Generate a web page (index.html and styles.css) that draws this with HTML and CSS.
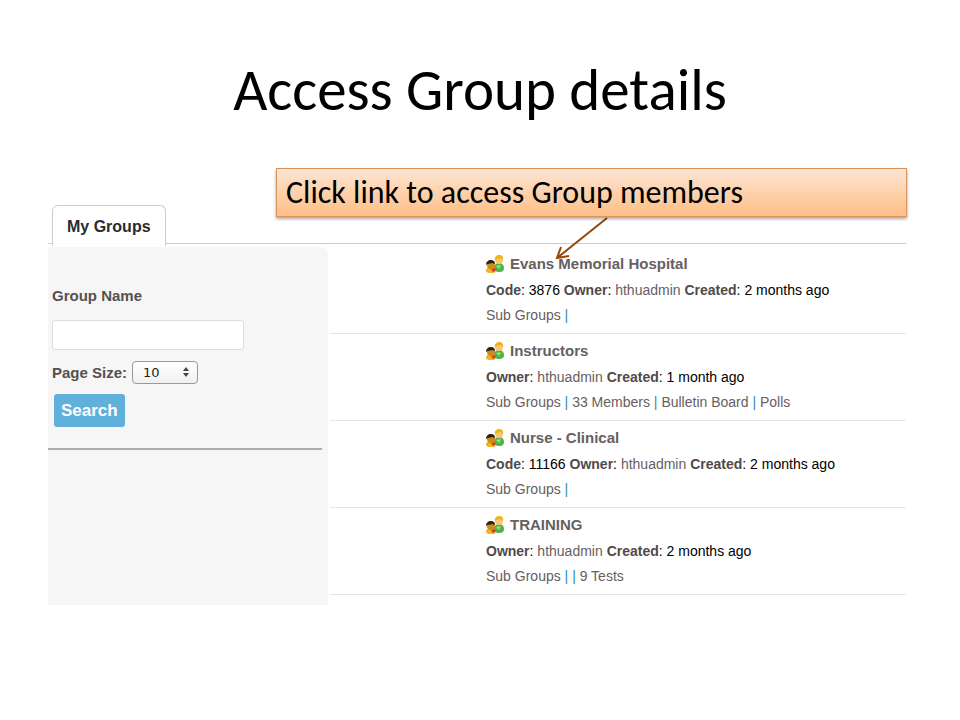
FILE: index.html
```html
<!DOCTYPE html>
<html lang="en">
  <head>
    <meta charset="UTF-8" />
    <meta name="viewport" content="width=device-width, initial-scale=1.0" />
    <title>Access Group details</title>
    <link rel="stylesheet" href="styles.css">
  </head>
  <body>
    <svg class="defs" width="0" height="0" aria-hidden="true">
      <symbol id="people" viewBox="0 0 18 18">
        <path d="M8 14c0-4 2-6 5-6s5 2 5 5c0 3-2 4-5 4s-5-1-5-3z" fill="#4fb548" />
        <path d="M10 11l3 3 2-4z" fill="#a5dc8c" />
        <circle cx="13" cy="5" r="4" fill="#f9c57b" />
        <path d="M9 5c-1-3 2-5 4-5 3 0 5 2 4 5l-2-2c-2 1-4 0-6 2z" fill="#efb416" />
        <path d="M0 16c0-3 2-4 5-4s5 1 5 4c-1 3-9 3-10 0z" fill="#f0b323" />
        <path d="M5 14l2 3 3-2-1-2z" fill="#d23d1b" />
        <circle cx="5" cy="10" r="4" fill="#d08a1c" />
        <path d="M0 10c0-3 2-5 5-5s4 2 4 4L6 8c-2 1-4 0-6 2z" fill="#2f230d" />
      </symbol>
    </svg>

    <h1>Access Group details</h1>

    <main>
      <nav class="tabs">
        <a class="tab" href="#groups">My Groups</a>
      </nav>

      <div class="content" id="groups">
        <form class="sidebar">
          <label class="name-label" for="group-name">Group Name</label>
          <input type="text" id="group-name" />
          <div class="page-size">
            <label for="page-size">Page Size:</label>
            <div class="select">
              <select id="page-size">
                <option>10</option>
                <option>25</option>
                <option>50</option>
              </select>
              <svg width="6" height="10" viewBox="0 0 6 10" aria-hidden="true">
                <path d="M0 4l3-4 3 4zM0 6h6l-3 4z" fill="#444" />
              </svg>
            </div>
          </div>
          <button type="submit">Search</button>
          <hr />
        </form>

        <section class="groups">
          <article class="group">
            <h2><svg class="icon"><use href="#people" /></svg><a href="#evans">Evans Memorial Hospital</a></h2>
            <p class="meta"><b>Code</b>: 3876 <b>Owner</b>: <a href="#hthuadmin">hthuadmin</a> <b>Created</b>: 2 months ago</p>
            <p class="links"><a href="#sub">Sub Groups</a> <i>|</i></p>
          </article>
          <article class="group">
            <h2><svg class="icon"><use href="#people" /></svg><a href="#instructors">Instructors</a></h2>
            <p class="meta"><b>Owner</b>: <a href="#hthuadmin">hthuadmin</a> <b>Created</b>: 1 month ago</p>
            <p class="links"><a href="#sub">Sub Groups</a> <i>|</i> <a href="#members">33 Members</a> <i>|</i> <a href="#board">Bulletin Board</a> <i>|</i> <a href="#polls">Polls</a></p>
          </article>
          <article class="group">
            <h2><svg class="icon"><use href="#people" /></svg><a href="#nurse">Nurse - Clinical</a></h2>
            <p class="meta"><b>Code</b>: 11166 <b>Owner</b>: <a href="#hthuadmin">hthuadmin</a> <b>Created</b>: 2 months ago</p>
            <p class="links"><a href="#sub">Sub Groups</a> <i>|</i></p>
          </article>
          <article class="group">
            <h2><svg class="icon"><use href="#people" /></svg><a href="#training">TRAINING</a></h2>
            <p class="meta"><b>Owner</b>: <a href="#hthuadmin">hthuadmin</a> <b>Created</b>: 2 months ago</p>
            <p class="links"><a href="#sub">Sub Groups</a> <i>|</i> <i>|</i> <a href="#tests">9 Tests</a></p>
          </article>
        </section>
      </div>

      <svg class="arrow" width="60" height="50" viewBox="0 0 60 50" aria-hidden="true">
        <path d="M56 5L6 45M10 34L6 45l12-2" fill="none" stroke="#974807" stroke-width="2" />
      </svg>
      <div class="callout">Click link to access Group members</div>
    </main>
  </body>
</html>
```

FILE: styles.css
```css
* {
  box-sizing: border-box;
}

body {
  margin: 0;
  background-color: #fff;
  color: #000;
  font-family: "Liberation Sans", Arial, sans-serif;
  font-size: 14px;
}

h1 {
  margin: 0;
  padding-top: 56px;
  font-family: Carlito, Lato, sans-serif;
  font-size: 59px;
  font-weight: normal;
  line-height: 68px;
  text-align: center;
}

a {
  color: #666060;
  text-decoration: none;
}

.defs {
  position: absolute;
}

main {
  position: relative;
  margin: 81px 54px 0 48px;
}

.tabs {
  display: flex;
  height: 39px;
  padding-left: 4px;
  border-bottom: 1px solid #ccc;
}

.tab {
  height: 41px;
  padding: 0 14px;
  border: 1px solid #ccc;
  border-bottom: 0;
  border-radius: 6px 6px 0 0;
  background-color: #fff;
  color: #2b2b2b;
  font-size: 16px;
  font-weight: bold;
  line-height: 41px;
}

.content {
  display: flex;
  gap: 2px;
  padding-top: 3px;
}

.sidebar {
  flex: 0 0 280px;
  padding: 39px 0 0 4px;
  border-radius: 0 8px 0 0;
  background-color: #f6f6f6;
  color: #555050;
  font-size: 15px;
  font-weight: bold;
}

.name-label {
  display: block;
  line-height: 20px;
}

#group-name {
  display: block;
  width: 192px;
  height: 30px;
  margin-top: 14px;
  border: 1px solid #ddd;
  border-radius: 3px;
  background-color: #fff;
}

.page-size {
  display: flex;
  align-items: center;
  gap: 5px;
  margin-top: 11px;
}

.select {
  position: relative;
}

.select svg {
  position: absolute;
  top: 6px;
  right: 9px;
  pointer-events: none;
}

select {
  display: block;
  width: 66px;
  height: 23px;
  padding: 0 10px;
  appearance: none;
  border: 1px solid #999;
  border-radius: 4px;
  background: linear-gradient(#fff, #f0f0f0);
  color: #222;
  font-family: "DejaVu Sans", sans-serif;
  font-size: 13px;
}

button {
  display: block;
  height: 33px;
  margin: 10px 0 0 2px;
  padding: 0 7px;
  border: 0;
  border-radius: 3px;
  background-color: #5fb1dc;
  color: #fff;
  font-family: inherit;
  font-size: 17px;
  font-weight: bold;
}

hr {
  height: 2px;
  margin: 21px 6px 0 -4px;
  border: 0;
  background-color: #acacac;
}

.groups {
  flex: 1;
  padding-bottom: 10px;
}

.group {
  padding: 4px 0 6px 156px;
  border-bottom: 1px solid #dfe6ea;
}

.group h2,
.group p {
  margin: 0;
  line-height: 26px;
}

.group h2 {
  display: flex;
  align-items: center;
  gap: 6px;
  font-size: 15px;
}

.group .links {
  line-height: 24px;
}

.links i {
  color: #3a87ad;
  font-style: normal;
}

.meta b {
  color: #504a4a;
}

.icon {
  width: 18px;
  height: 18px;
}

.callout {
  position: absolute;
  top: -37px;
  left: 228px;
  right: -1px;
  padding: 0 9px;
  border: 1px solid #d99559;
  background: linear-gradient(#fde5d3, #ffbe86);
  box-shadow: 0 2px 3px rgba(0, 0, 0, 0.35);
  font-family: Carlito, Lato, sans-serif;
  font-size: 32px;
  line-height: 47px;
}

.arrow {
  position: absolute;
  top: 8px;
  left: 503px;
}
```
